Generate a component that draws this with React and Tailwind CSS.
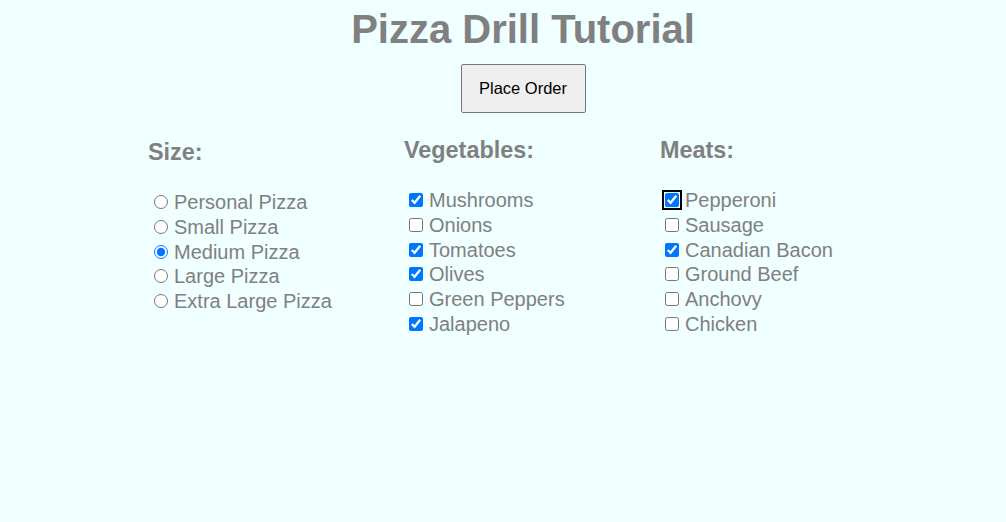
import React, { useState } from 'react';

const sizes = ['Personal Pizza', 'Small Pizza', 'Medium Pizza', 'Large Pizza', 'Extra Large Pizza'];
const vegetables = ['Mushrooms', 'Onions', 'Tomatoes', 'Olives', 'Green Peppers', 'Jalapeno'];
const meats = ['Pepperoni', 'Sausage', 'Canadian Bacon', 'Ground Beef', 'Anchovy', 'Chicken'];

export default function App() {
  const [size, setSize] = useState('Medium Pizza');
  const [veg, setVeg] = useState(['Mushrooms', 'Tomatoes', 'Olives', 'Jalapeno']);
  const [meat, setMeat] = useState(['Pepperoni', 'Canadian Bacon']);

  const toggle = (list, setList, item) => {
    setList(list.includes(item) ? list.filter(i => i !== item) : [...list, item]);
  };

  return (
    <div className="min-h-[522px] bg-[#f0ffff] text-[#808080] text-[20px] font-['Liberation_Sans',Arial,sans-serif]">
      {/* Header */}
      <div className="pl-[40px]">
        <h1 className="pt-[6px] text-center text-[40px] font-bold leading-[46px]">Pizza Drill Tutorial</h1>
        <div className="mt-[12px] flex justify-center">
          <button className="h-[49px] w-[125px] rounded-[2px] border border-[#767676] bg-[#efefef] text-[16.5px] text-black">
            Place Order
          </button>
        </div>
      </div>

      {/* Options */}
      <div className="mx-auto mt-[24px] flex w-[768px]">
        <div className="w-[256px] pl-[29px] pt-[2px]">
          <h3 className="text-[23.4px] font-bold leading-[27px]">Size:</h3>
          <ul className="mt-[24px]">
            {sizes.map(s => (
              <li key={s} className="leading-[24.8px]">
                <label>
                  <input
                    type="radio"
                    name="size"
                    className="ml-[6px] mr-[6px] mt-[3px] h-[14px] w-[14px] align-baseline"
                    checked={size === s}
                    onChange={() => setSize(s)}
                  />
                  {s}
                </label>
              </li>
            ))}
          </ul>
        </div>

        <div className="w-[256px] pl-[29px]">
          <h3 className="text-[23.4px] font-bold leading-[27px]">Vegetables:</h3>
          <ul className="mt-[24px]">
            {vegetables.map(v => (
              <li key={v} className="leading-[24.8px]">
                <label>
                  <input
                    type="checkbox"
                    className="my-[3px] ml-[5px] mr-[6px] h-[14px] w-[14px] align-baseline"
                    checked={veg.includes(v)}
                    onChange={() => toggle(veg, setVeg, v)}
                  />
                  {v}
                </label>
              </li>
            ))}
          </ul>
        </div>

        <div className="w-[256px] pl-[29px]">
          <h3 className="text-[23.4px] font-bold leading-[27px]">Meats:</h3>
          <ul className="mt-[24px]">
            {meats.map((m, i) => (
              <li key={m} className="leading-[24.8px]">
                <label>
                  <input
                    type="checkbox"
                    className={`my-[3px] ml-[5px] mr-[6px] h-[14px] w-[14px] align-baseline ${
                      i === 0 ? 'rounded-[3px] outline-2 outline-offset-1 outline-black' : ''
                    }`}
                    checked={meat.includes(m)}
                    onChange={() => toggle(meat, setMeat, m)}
                  />
                  {m}
                </label>
              </li>
            ))}
          </ul>
        </div>
      </div>
    </div>
  );
}
